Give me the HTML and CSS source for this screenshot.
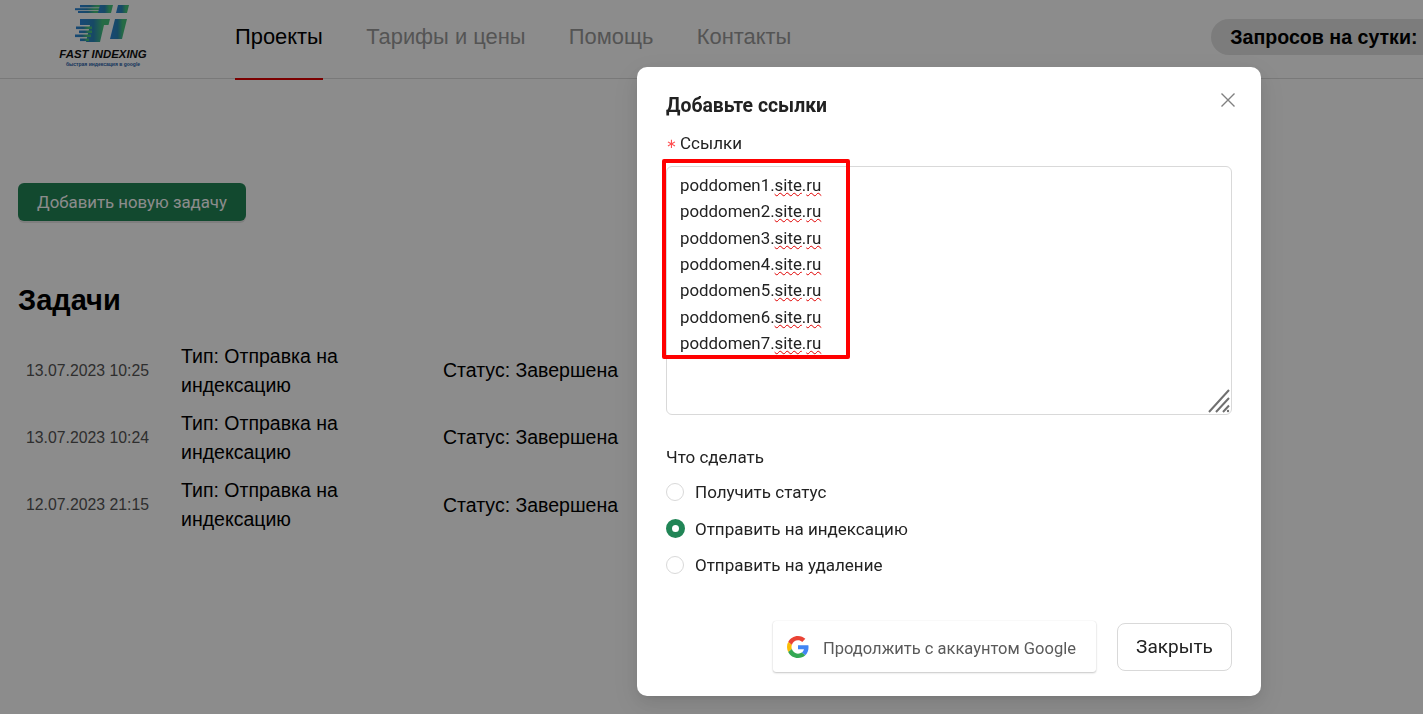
FILE: index.html
```html
<!DOCTYPE html>
<html lang="ru">
<head>
  <meta charset="UTF-8">
  <meta name="viewport" content="width=device-width, initial-scale=1.0">
  <title>Fast Indexing</title>
  <link rel="stylesheet" href="styles.css">
</head>
<body>
  <header class="topbar">
    <a class="logo">
      <svg class="logo-mark" width="58" height="40" viewBox="0 0 58 40">
        <defs>
          <linearGradient id="fi" x1="0" y1="0" x2="1" y2="0">
            <stop offset="0" stop-color="#2a84d8"/>
            <stop offset="0.45" stop-color="#2a86b8"/>
            <stop offset="0.75" stop-color="#45c47e"/>
            <stop offset="1" stop-color="#45c47e"/>
          </linearGradient>
        </defs>
        <g fill="url(#fi)">
          <rect x="6" y="1" width="22" height="2.4"/>
          <rect x="1" y="4.2" width="26" height="2"/>
          <rect x="4" y="7" width="22" height="2"/>
          <polygon points="26,1 39,1 37,9 24,9"/>
          <polygon points="44,1 55,1 53,9 42,9"/>
          <polygon points="6,15 36,15 34.5,21 30,21 26,38 12,38 16,21 6,21"/>
          <rect x="2" y="22.5" width="16" height="2.6"/>
          <rect x="5" y="26.5" width="13" height="2.6"/>
          <rect x="1" y="30.5" width="16" height="2.6"/>
          <rect x="6" y="34.5" width="9" height="2.6"/>
          <polygon points="41,15 53,15 48,35 36,35"/>
        </g>
      </svg>
      <span class="logo-name">FAST INDEXING</span>
      <span class="logo-sub">быстрая индексация в google</span>
    </a>
    <nav class="menu">
      <a class="menu-item active">Проекты</a>
      <a class="menu-item">Тарифы и цены</a>
      <a class="menu-item">Помощь</a>
      <a class="menu-item">Контакты</a>
    </nav>
    <div class="limits">Запросов на сутки:</div>
  </header>

  <main class="content">
    <button class="btn-add">Добавить новую задачу</button>
    <h1 class="tasks-title">Задачи</h1>
    <div class="task">
      <div class="task-date">13.07.2023 10:25</div>
      <div class="task-type">Тип: Отправка на индексацию</div>
      <div class="task-status">Статус: Завершена</div>
    </div>
    <div class="task">
      <div class="task-date">13.07.2023 10:24</div>
      <div class="task-type">Тип: Отправка на индексацию</div>
      <div class="task-status">Статус: Завершена</div>
    </div>
    <div class="task">
      <div class="task-date">12.07.2023 21:15</div>
      <div class="task-type">Тип: Отправка на индексацию</div>
      <div class="task-status">Статус: Завершена</div>
    </div>
  </main>

  <div class="mask">
    <div class="modal">
      <svg class="modal-close" width="16" height="16" viewBox="0 0 16 16">
        <path d="M1.5 1.5 L14.5 14.5 M14.5 1.5 L1.5 14.5" stroke="#808080" stroke-width="1.4" fill="none"/>
      </svg>
      <h2 class="modal-title">Добавьте ссылки</h2>
      <div class="field-label"><span class="required">∗</span>Ссылки</div>
      <div class="links-input">
        <div>poddomen1.<span class="typo">site</span>.<span class="typo">ru</span></div>
        <div>poddomen2.<span class="typo">site</span>.<span class="typo">ru</span></div>
        <div>poddomen3.<span class="typo">site</span>.<span class="typo">ru</span></div>
        <div>poddomen4.<span class="typo">site</span>.<span class="typo">ru</span></div>
        <div>poddomen5.<span class="typo">site</span>.<span class="typo">ru</span></div>
        <div>poddomen6.<span class="typo">site</span>.<span class="typo">ru</span></div>
        <div>poddomen7.<span class="typo">site</span>.<span class="typo">ru</span></div>
        <svg class="grip" width="22" height="24" viewBox="0 0 22 24">
          <path d="M1 23 L21 1 M8 23 L21 9 M15 23 L21 16.5" stroke="#707070" stroke-width="2" fill="none"/>
          <circle cx="20" cy="22" r="1.2" fill="#707070"/>
        </svg>
      </div>
      <div class="field-label action-label">Что сделать</div>
      <div class="radio-group">
        <label class="radio"><span class="radio-dot"></span>Получить статус</label>
        <label class="radio"><span class="radio-dot checked"></span>Отправить на индексацию</label>
        <label class="radio"><span class="radio-dot"></span>Отправить на удаление</label>
      </div>
      <div class="modal-footer">
        <button class="btn-google">
          <svg class="google-icon" width="22" height="22" viewBox="0 0 48 48">
            <path fill="#EA4335" d="M24 9.5c3.54 0 6.71 1.22 9.21 3.6l6.85-6.85C35.9 2.38 30.47 0 24 0 14.62 0 6.51 5.38 2.56 13.22l7.98 6.19C12.43 13.72 17.74 9.5 24 9.5z"/>
            <path fill="#4285F4" d="M46.98 24.55c0-1.57-.15-3.09-.38-4.55H24v9.02h12.94c-.58 2.96-2.26 5.48-4.78 7.18l7.73 6c4.51-4.18 7.09-10.36 7.09-17.65z"/>
            <path fill="#FBBC05" d="M10.53 28.59c-.48-1.45-.76-2.99-.76-4.59s.27-3.14.76-4.59l-7.98-6.19C.92 16.46 0 20.12 0 24c0 3.88.92 7.54 2.56 10.78l7.97-6.19z"/>
            <path fill="#34A853" d="M24 48c6.48 0 11.93-2.13 15.89-5.81l-7.73-6c-2.15 1.45-4.92 2.3-8.16 2.3-6.26 0-11.57-4.22-13.47-9.91l-7.98 6.19C6.51 42.62 14.62 48 24 48z"/>
          </svg>
          <span class="google-label">Продолжить с аккаунтом Google</span>
        </button>
        <button class="btn-close">Закрыть</button>
      </div>
    </div>
  </div>

  <div class="highlight"></div>
</body>
</html>
```

FILE: styles.css
```css
html, body {
  height: 100%;
}
body {
  margin: 0;
  background-color: #fff;
  color: #000;
  font-family: "Liberation Sans", Arial, sans-serif;
  overflow: hidden;
}

/* top bar */
.topbar {
  display: flex;
  height: 78px;
  border-bottom: 1px solid #dcdcdc;
  white-space: nowrap;
}
.logo {
  display: flex;
  flex: none;
  flex-direction: column;
  align-items: center;
  width: 90px;
  margin-left: 58px;
  padding-top: 4px;
}
.logo-mark {
  margin-left: -1px;
  filter: blur(0.6px);
}
.logo-name {
  margin-top: 3px;
  font-size: 11.4px;
  line-height: 14px;
  font-weight: bold;
  font-style: italic;
  color: #111;
}
.logo-sub {
  font-size: 5px;
  line-height: 6px;
  font-weight: bold;
  color: #2a5fa8;
}
.menu {
  display: flex;
  flex: none;
  gap: 43.3px;
  margin-left: 87px;
}
.menu-item {
  box-sizing: border-box;
  height: 80px;
  padding-top: 23px;
  border-bottom: 2px solid transparent;
  font-size: 21.9px;
  line-height: 28px;
  color: #9a9a9a;
}
.menu-item.active {
  color: #000;
  border-bottom-color: #e00000;
}
.limits {
  align-self: flex-start;
  flex: none;
  margin-top: 19px;
  margin-left: 420px;
  padding: 0 20px 0 19px;
  width: 300px;
  height: 36px;
  line-height: 36px;
  border-radius: 18px;
  background-color: #e2e2e2;
  font-size: 19.6px;
  font-weight: bold;
}

/* task list */
.content {
  padding: 104px 18px 0;
}
.btn-add {
  display: block;
  width: 228px;
  height: 38px;
  padding: 0;
  border: none;
  border-radius: 6px;
  background-color: #218556;
  box-shadow: 0 2px 0 rgba(0, 0, 0, 0.1);
  color: #fff;
  font-family: Roboto, sans-serif;
  font-size: 16.8px;
}
.tasks-title {
  margin: 62px 0 20px;
  font-size: 29px;
  line-height: 34px;
}
.task {
  display: flex;
  align-items: center;
  height: 67.3px;
  padding-left: 8px;
}
.task-date {
  width: 155px;
  font-size: 15.8px;
  color: #555;
}
.task-type {
  width: 190px;
  margin-right: 72px;
  font-size: 19.5px;
  line-height: 29px;
}
.task-status {
  font-size: 19.5px;
}

/* modal */
.mask {
  position: fixed;
  inset: 0;
  background-color: rgba(0, 0, 0, 0.45);
  display: flex;
  justify-content: flex-start;
  align-items: flex-start;
  padding: 67px 0 0 637px;
}
.modal {
  position: relative;
  width: 624px;
  height: 629px;
  box-sizing: border-box;
  padding: 27px 29px 0;
  background-color: #fff;
  border-radius: 10px;
  box-shadow: 0 6px 16px rgba(0, 0, 0, 0.08), 0 3px 6px -4px rgba(0, 0, 0, 0.12), 0 9px 28px 8px rgba(0, 0, 0, 0.05);
  font-family: Roboto, sans-serif;
  color: #222;
}
.modal-close {
  position: absolute;
  top: 25px;
  right: 25px;
}
.modal-title {
  margin: 0;
  font-size: 19.4px;
  line-height: 24px;
  font-weight: bold;
}
.field-label {
  height: 25px;
  margin-top: 13px;
  font-size: 17px;
  line-height: 24px;
}
.required {
  display: inline-block;
  width: 14px;
  color: #ff4d4f;
  font-family: "DejaVu Sans", sans-serif;
  font-size: 13px;
  vertical-align: 1px;
}
.links-input {
  position: relative;
  height: 249px;
  box-sizing: border-box;
  margin-top: 10px;
  padding: 5px 13px;
  border: 1px solid #d9d9d9;
  border-radius: 6px;
  font-size: 16.85px;
  line-height: 26.35px;
}
.typo {
  text-decoration: underline wavy #e00000 1px;
  text-underline-offset: 1px;
}
.grip {
  position: absolute;
  right: 1px;
  bottom: 1px;
}
.action-label {
  margin-top: 30px;
}
.radio-group {
  display: flex;
  flex-direction: column;
  gap: 12.5px;
  margin-top: 10px;
}
.radio {
  display: flex;
  align-items: center;
  height: 24px;
  font-size: 17px;
}
.radio-dot {
  width: 18px;
  height: 18px;
  box-sizing: border-box;
  margin-right: 11px;
  border: 1px solid #d9d9d9;
  border-radius: 50%;
}
.radio-dot.checked {
  width: 19px;
  height: 19px;
  margin-right: 10px;
  border: 6px solid #218556;
}
.modal-footer {
  display: flex;
  justify-content: flex-end;
  align-items: center;
  gap: 21px;
  margin-top: 44px;
}
.btn-google {
  display: flex;
  align-items: center;
  gap: 14px;
  width: 323px;
  height: 51px;
  box-sizing: border-box;
  padding: 0 0 0 14px;
  border: none;
  border-radius: 3px;
  background-color: #fff;
  box-shadow: 0 0 1px rgba(0, 0, 0, 0.12), 0 1px 2px rgba(0, 0, 0, 0.22);
  color: #5a5a5a;
  font-family: Roboto, sans-serif;
  font-size: 16.5px;
  white-space: nowrap;
}
.google-icon {
  flex: none;
}
.google-label {
  padding-top: 3px;
}
.btn-close {
  width: 115px;
  height: 48px;
  border: 1px solid #d9d9d9;
  border-radius: 8px;
  background-color: #fff;
  color: #222;
  font-family: Roboto, sans-serif;
  font-size: 19px;
}

/* red annotation drawn over the screenshot */
.highlight {
  position: fixed;
  left: 662px;
  top: 159px;
  width: 188px;
  height: 200px;
  box-sizing: border-box;
  border: 4px solid #f00;
  border-radius: 2px;
}
```
